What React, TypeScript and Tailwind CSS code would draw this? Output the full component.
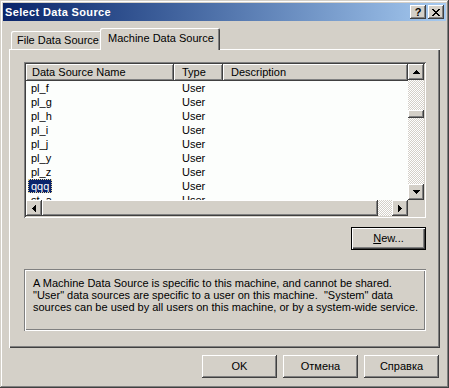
import React from 'react';

const raised =
  'shadow-[inset_-1px_-1px_#404040,inset_1px_1px_#ffffff,inset_-2px_-2px_#808080,inset_2px_2px_#d4d0c8]';
const sunken =
  'shadow-[inset_1px_1px_#808080,inset_-1px_-1px_#ffffff,inset_2px_2px_#404040,inset_-2px_-2px_#d4d0c8]';
const etched =
  'shadow-[inset_1px_1px_#808080,inset_-1px_-1px_#ffffff,inset_2px_2px_#ffffff,inset_-2px_-2px_#808080]';
const dither =
  '[background-image:repeating-conic-gradient(#d4d0c8_0_25%,#ffffff_0_50%)] [background-size:2px_2px]';

const rows = ['pl_f', 'pl_g', 'pl_h', 'pl_i', 'pl_j', 'pl_y', 'pl_z', 'qqq', 'st_a'];

// pixel triangles for scrollbar arrows
function Arrow({ dir }: { dir: 'up' | 'down' | 'left' | 'right' }) {
  const horiz = dir === 'left' || dir === 'right';
  const d = {
    up: 'M3 0h1v1h-1z M2 1h3v1h-3z M1 2h5v1h-5z M0 3h7v1h-7z',
    down: 'M0 0h7v1h-7z M1 1h5v1h-5z M2 2h3v1h-3z M3 3h1v1h-1z',
    left: 'M3 0h1v7h-1z M2 1h1v5h-1z M1 2h1v3h-1z M0 3h1v1h-1z',
    right: 'M0 0h1v7h-1z M1 1h1v5h-1z M2 2h1v3h-1z M3 3h1v1h-1z',
  }[dir];
  return (
    <svg
      width={horiz ? 4 : 7}
      height={horiz ? 7 : 4}
      viewBox={horiz ? '0 0 4 7' : '0 0 7 4'}
      shapeRendering="crispEdges"
    >
      <path d={d} fill="#000" />
    </svg>
  );
}

function ScrollBtn({ dir }: { dir: 'up' | 'down' | 'left' | 'right' }) {
  return (
    <div className={`w-[16px] h-[16px] shrink-0 bg-[#d4d0c8] flex items-center justify-center ${raised}`}>
      <Arrow dir={dir} />
    </div>
  );
}

function DlgButton({ children, isDefault }: { children: React.ReactNode; isDefault?: boolean }) {
  const border = isDefault
    ? 'shadow-[inset_1px_1px_#000000,inset_-1px_-1px_#000000,inset_2px_2px_#ffffff,inset_-2px_-2px_#404040,inset_-3px_-3px_#808080]'
    : raised;
  return (
    <div className={`w-[75px] h-[23px] bg-[#d4d0c8] flex items-center justify-center text-black ${border}`}>
      {children}
    </div>
  );
}

function DataList() {
  return (
    <div className={`ml-[15px] mt-[13px] w-[402px] h-[156px] p-[2px] bg-white ${sunken}`}>
      <div className="flex h-full">
        <div className="flex flex-col w-[382px]">
          <div className="flex-1 overflow-hidden bg-[#fcfefc]">
            {/* column headers */}
            <div className="flex h-[17px]">
              <div className={`w-[148px] bg-[#d4d0c8] pl-[6px] flex items-center ${raised}`}>Data Source Name</div>
              <div className={`w-[49px] bg-[#d4d0c8] pl-[8px] flex items-center ${raised}`}>Type</div>
              <div className={`flex-1 bg-[#d4d0c8] pl-[8px] flex items-center ${raised}`}>Description</div>
            </div>
            {rows.map((r) => (
              <div key={r} className="flex h-[14px] items-center">
                {r === 'qqq' ? (
                  <div className="w-[148px] h-full pl-[2px] flex">
                    <span className="h-full px-[2px] flex items-center bg-[#0a246a] text-white border border-dotted border-[#e6d49a]">
                      {r}
                    </span>
                  </div>
                ) : (
                  <div className="w-[148px] pl-[5px]">{r}</div>
                )}
                <div className="pl-[8px]">User</div>
              </div>
            ))}
          </div>
          {/* horizontal scrollbar */}
          <div className="flex h-[16px]">
            <ScrollBtn dir="left" />
            <div className={`w-[336px] h-full bg-[#d4d0c8] ${raised}`} />
            <div className={`flex-1 h-full ${dither}`} />
            <ScrollBtn dir="right" />
          </div>
        </div>
        {/* vertical scrollbar */}
        <div className="flex flex-col w-[16px]">
          <ScrollBtn dir="up" />
          <div className={`flex-1 flex flex-col ${dither}`}>
            <div className="h-[30px]" />
            <div className={`h-[8px] bg-[#d4d0c8] ${raised}`} />
          </div>
          <ScrollBtn dir="down" />
          <div className="h-[16px] bg-[#d4d0c8]" />
        </div>
      </div>
    </div>
  );
}

export default function App() {
  return (
    <div
      className={`w-[449px] h-[388px] p-[3px] bg-[#d4d0c8] text-[11px] leading-none text-black font-['Liberation_Sans',Arial,sans-serif] flex flex-col shadow-[inset_-1px_-1px_#404040,inset_1px_1px_#d4d0c8,inset_-2px_-2px_#808080,inset_2px_2px_#ffffff]`}
    >
      {/* Title bar */}
      <div className="h-[18px] bg-linear-to-r from-[#0a246a] to-[#a6caf0] flex items-center pl-[2px] pr-[2px]">
        <span className="text-white font-bold text-[11px] tracking-[0.35px]">Select Data Source</span>
        <div className="ml-auto flex gap-[2px]">
          <div className={`w-[16px] h-[14px] bg-[#d4d0c8] flex items-center justify-center font-bold text-[11px] ${raised}`}>
            ?
          </div>
          <div className={`w-[16px] h-[14px] bg-[#d4d0c8] flex items-center justify-center ${raised}`}>
            <svg width="8" height="7" viewBox="0 0 8 7" shapeRendering="crispEdges">
              <path
                d="M0 0h2v1h-2z M1 1h2v1h-2z M2 2h4v1h-4z M3 3h2v1h-2z M2 4h4v1h-4z M1 5h2v1h-2z M0 6h2v1h-2z M6 0h2v1h-2z M5 1h2v1h-2z M5 5h2v1h-2z M6 6h2v1h-2z"
                fill="#000"
              />
            </svg>
          </div>
        </div>
      </div>

      {/* Body */}
      <div className="flex-1 flex flex-col px-[6px] pt-[7px]">
        {/* Tabs */}
        <div className="flex items-end h-[21px] pl-[2px]">
          <div className="w-[91px] h-[18px] pl-[6px] pt-px flex items-center rounded-t-[2px] shadow-[inset_1px_1px_#ffffff,inset_-1px_0_#404040,inset_-2px_0_#808080]">
            File Data Source
          </div>
          <div className="relative z-10 -ml-[2px] -mb-px w-[120px] h-[22px] pl-[8px] pb-[1px] flex items-center bg-[#d4d0c8] rounded-t-[2px] shadow-[inset_1px_1px_#ffffff,inset_-1px_0_#404040,inset_-2px_0_#808080]">
            Machine Data Source
          </div>
        </div>

        {/* Tab panel */}
        <div className="h-[299px] flex flex-col shadow-[inset_1px_1px_#ffffff,inset_-1px_-1px_#404040,inset_-2px_-2px_#808080]">
          <DataList />

          <div className="ml-[15px] w-[402px] mt-[9px] flex justify-end">
            <DlgButton isDefault>
              <span>
                <span className="underline">N</span>ew...
              </span>
            </DlgButton>
          </div>

          <div className={`ml-[15px] mt-[19px] w-[402px] h-[62px] pl-[9px] pt-[8px] leading-[12px] whitespace-pre ${etched}`}>
            <div>A Machine Data Source is specific to this machine, and cannot be shared.</div>
            <div>"User" data sources are specific to a user on this machine.  "System" data</div>
            <div>sources can be used by all users on this machine, or by a system-wide service.</div>
          </div>
        </div>

        {/* Dialog buttons */}
        <div className="mt-[7px] mr-[1px] flex justify-end gap-[6px]">
          <DlgButton>OK</DlgButton>
          <DlgButton>Отмена</DlgButton>
          <DlgButton>Справка</DlgButton>
        </div>
      </div>
    </div>
  );
}
